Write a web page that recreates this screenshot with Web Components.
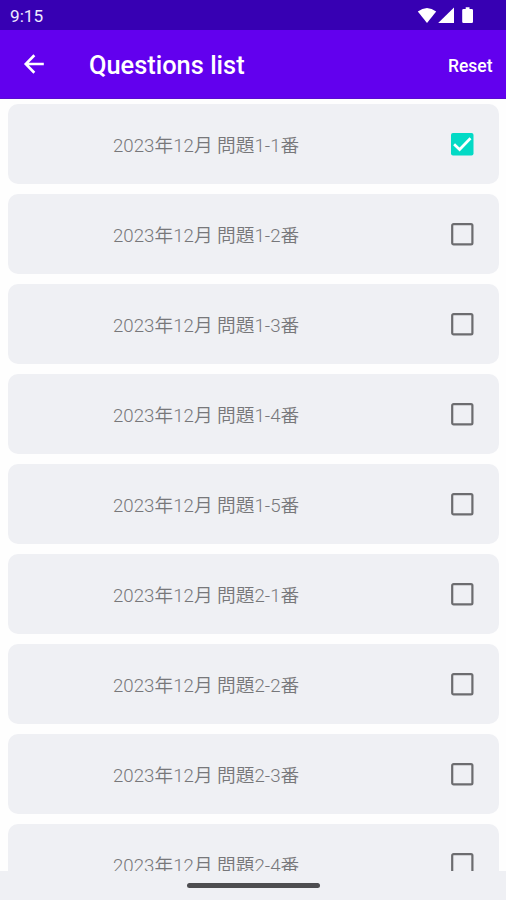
<!DOCTYPE html>
<html lang="ja">
<head>
<meta charset="utf-8">
<title>Questions list</title>
<style>
	html, body {
		margin: 0;
		height: 100%;
	}
	body {
		font-family: Roboto, 'Noto Sans CJK JP', sans-serif;
		background: #fefefe;
		overflow: hidden;
	}
</style>
</head>
<body>
<questions-screen></questions-screen>

<script>
(function() {
	function makeTemplate(html) {
		let tmpl = document.createElement('template');
		tmpl.innerHTML = html;
		return tmpl;
	}

	/* status bar: clock and system icons */
	const statusTmpl = makeTemplate(`
		<style>
			:host {
				display: flex;
				align-items: center;
				justify-content: space-between;
				box-sizing: border-box;
				flex: none;
				height: 30px;
				padding: 2px 32px 0 10px;
				background: #3700b3;
				color: #eeeaff;
				font-size: 17.2px;
				line-height: 28px;
			}
			svg {
				display: block;
				margin-bottom: 2px;
			}
		</style>
		<slot></slot>
		<svg width="57" height="18" viewBox="0 0 57 18" fill="#fff">
			<path d="M0.8 5.6Q10 -1.4 19.2 5.6L10 16.9Z"/>
			<path d="M21.2 17H37V1.4Z"/>
			<path d="M46.5 3H48.7V1.3H52.5V3H54.7Q56 3 56 4.3V15.7Q56 17 54.7 17H46.5Q45.2 17 45.2 15.7V4.3Q45.2 3 46.5 3Z"/>
		</svg>
	`);

	class StatusBar extends HTMLElement {
		constructor() {
			super();
			this.attachShadow({ mode: 'open' }).appendChild(statusTmpl.content.cloneNode(true));
		}
	}

	/* app bar: back arrow, title, action */
	const appTmpl = makeTemplate(`
		<style>
			:host {
				display: flex;
				align-items: center;
				box-sizing: border-box;
				flex: none;
				height: 69px;
				padding: 4px 13.5px 0 20px;
				background: #6200ee;
				color: #fff;
				border-bottom: 1px solid #5a0bd0;
			}
			svg {
				display: block;
				margin-right: 41px;
				margin-bottom: 4px;
			}
			.title {
				flex: 1;
				margin-bottom: 2px;
				font-size: 25.4px;
				font-weight: 500;
				line-height: 32px;
			}
			.action {
				font-size: 17.5px;
				font-weight: 500;
			}
		</style>
		<svg width="28" height="28" viewBox="0 0 24 24" fill="#fff">
			<path d="M20.4 10.9H7.6l5.5-5.6L11.5 3.7 3.4 12l8.1 8.3 1.6-1.6L7.6 13.1h12.8z"/>
		</svg>
		<span class="title"><slot></slot></span>
		<span class="action"><slot name="action"></slot></span>
	`);

	class AppBar extends HTMLElement {
		constructor() {
			super();
			this.attachShadow({ mode: 'open' }).appendChild(appTmpl.content.cloneNode(true));
		}
	}

	/* one row of the list */
	const itemTmpl = makeTemplate(`
		<style>
			:host {
				display: flex;
				align-items: center;
				justify-content: space-between;
				box-sizing: border-box;
				flex: none;
				height: 80px;
				padding: 0 25px 0 105px;
				border-radius: 10px;
				background: #eff0f4;
				color: #77777a;
				font-size: 18.7px;
				font-weight: 350;
				line-height: 28px;
				cursor: pointer;
			}
			.label {
				padding-top: 4px;
			}
			svg {
				display: block;
			}
			.on {
				display: none;
			}
			:host([checked]) .on {
				display: block;
			}
			:host([checked]) .off {
				display: none;
			}
		</style>
		<span class="label"><slot></slot></span>
		<svg width="24" height="24" viewBox="0 0 24 24">
			<rect class="off" x="2.2" y="2.2" width="20.2" height="20.2" rx="1.4" fill="none" stroke="#6c6c6f" stroke-width="2.2"/>
			<g class="on">
				<rect x="1" y="1" width="22.5" height="22.5" rx="2" fill="#03dac5"/>
				<path d="M4.1 12.3L9.6 17.5L20.5 6.3" fill="none" stroke="#fff" stroke-width="2.7"/>
			</g>
		</svg>
	`);

	class QuestionItem extends HTMLElement {
		constructor() {
			super();
			this.attachShadow({ mode: 'open' }).appendChild(itemTmpl.content.cloneNode(true));
			this.addEventListener('click', () => this.toggleAttribute('checked'));
		}
	}

	/* the whole screen */
	const screenTmpl = makeTemplate(`
		<style>
			:host {
				display: flex;
				flex-direction: column;
				height: 100vh;
			}
			.list {
				display: flex;
				flex-direction: column;
				flex: 1;
				min-height: 0;
				gap: 10px;
				padding: 5px 7px 0 8px;
				box-sizing: border-box;
				overflow: hidden;
			}
			.nav {
				display: flex;
				align-items: center;
				justify-content: center;
				flex: none;
				height: 29px;
				background: #eff0f4;
			}
			.handle {
				width: 133px;
				height: 5px;
				border-radius: 3px;
				background: #4d4d50;
			}
		</style>
		<status-bar>9:15</status-bar>
		<app-bar>Questions list<span slot="action">Reset</span></app-bar>
		<div class="list"></div>
		<div class="nav"><div class="handle"></div></div>
	`);

	class QuestionsScreen extends HTMLElement {
		questions = ['1-1', '1-2', '1-3', '1-4', '1-5', '2-1', '2-2', '2-3', '2-4'];

		constructor() {
			super();
			let shadow = this.attachShadow({ mode: 'open' });
			shadow.appendChild(screenTmpl.content.cloneNode(true));

			let list = shadow.querySelector('.list');
			for (let i = 0; i < this.questions.length; i++) {
				let item = document.createElement('question-item');
				item.textContent = '2023年12月 問題' + this.questions[i] + '番';
				if (i == 0) {
					item.setAttribute('checked', '');
				}
				list.appendChild(item);
			}
		}
	}

	customElements.define('status-bar', StatusBar);
	customElements.define('app-bar', AppBar);
	customElements.define('question-item', QuestionItem);
	customElements.define('questions-screen', QuestionsScreen);
})();
</script>
</body>
</html>
